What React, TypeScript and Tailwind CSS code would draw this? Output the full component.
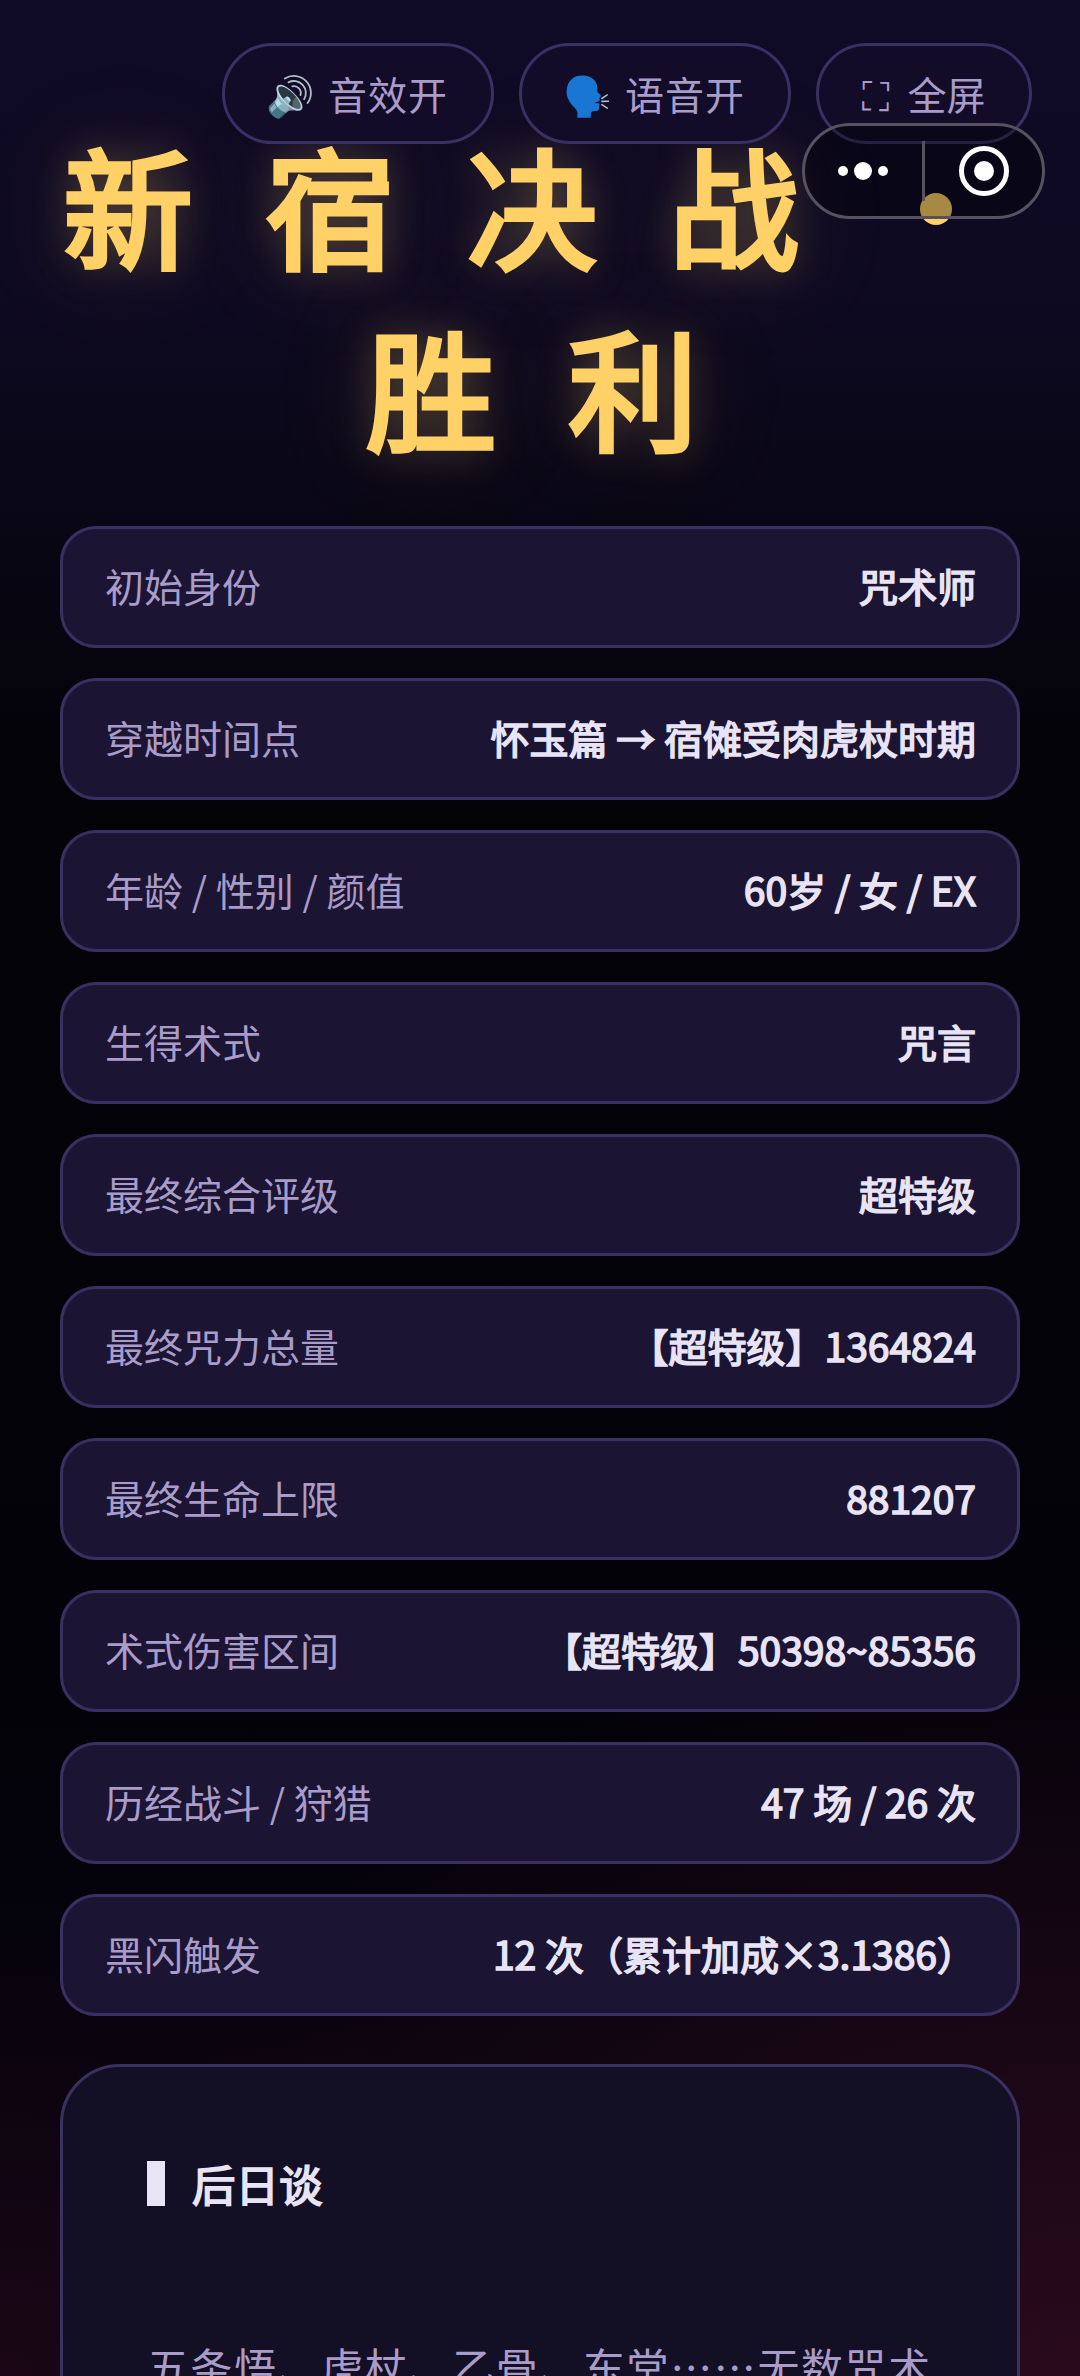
import React from "react";

const rows = [
  ["初始身份", "咒术师"],
  ["穿越时间点", "怀玉篇 → 宿傩受肉虎杖时期"],
  ["年龄 / 性别 / 颜值", "60岁 / 女 / EX"],
  ["生得术式", "咒言"],
  ["最终综合评级", "超特级"],
  ["最终咒力总量", "【超特级】1364824"],
  ["最终生命上限", "881207"],
  ["术式伤害区间", "【超特级】50398~85356"],
  ["历经战斗 / 狩猎", "47 场 / 26 次"],
  ["黑闪触发", "12 次（累计加成×3.1386）"],
];

const font = "[font-family:'Noto_Sans_CJK_SC','Noto_Sans',sans-serif]";

const TopButton = ({ icon, text, className }: { icon: string; text: string; className: string }) => (
  <div className={`${className} h-[101px] flex items-center justify-center rounded-full border-[3px] border-[#3a3163] bg-[#120c28] text-[39px] text-[#a99cc9]`}>
    <span>{icon}</span>
    <span>{text}</span>
  </div>
);

const Row = ({ label, value }: { label: string; value: string }) => (
  <div className="h-[122px] flex items-center justify-between pl-[42px] pr-[41px] pb-[3px] rounded-[36px] border-[3px] border-[#3a3163] bg-[#1b1533]">
    <span className="text-[39px] text-[#a99cc9]">{label}</span>
    <span className="text-[39px] text-[#e9e4f5] [-webkit-text-stroke:1.6px_#e9e4f5]">{value}</span>
  </div>
);

export default function App() {
  return (
    <div className={`${font} relative w-[1080px] h-[2376px] overflow-hidden bg-[radial-gradient(ellipse_1000px_750px_at_100%_100%,#290a1c_0%,transparent_100%),radial-gradient(ellipse_700px_450px_at_0%_100%,#1a0616_0%,transparent_100%),linear-gradient(180deg,#0f0a26_0%,#0e0a22_12%,#040308_32%,#030208_70%,#080410_100%)]`}>
      <div className="absolute top-[43px] left-[222px] flex gap-[25px]">
        <TopButton icon="🔊" text="音效开" className="w-[272px] gap-[12px] tracking-[1px] pr-[2px]" />
        <TopButton icon="🗣️" text="语音开" className="w-[272px] gap-[12px] tracking-[1px] pr-[2px]" />
        <TopButton icon="⛶" text="全屏" className="w-[216px] gap-[18px]" />
      </div>

      <div className="pt-[111px] text-[130px] leading-[182px] text-[#ffd166] tracking-[72px] [-webkit-text-stroke:5px_#ffd166] [text-shadow:0_0_40px_rgba(255,209,102,0.35),0_0_110px_rgba(255,209,102,0.22)]">
        <div className="ml-[63px]">新宿决战</div>
        <div className="ml-[366px]">胜利</div>
      </div>

      <div className="mt-[51px] mx-[60px] flex flex-col gap-[30px]">
        {rows.map(([label, value]) => (
          <Row key={label} label={label} value={value} />
        ))}
        <div className="mt-[18px] h-[600px] px-[84px] pt-[84px] rounded-[60px] border-[3px] border-[#3a3163] bg-[#130f24]">
          <div className="flex items-center gap-[27px]">
            <span className="w-[18px] h-[45px] bg-[#e9e4f5]" />
            <span className="text-[43.5px] text-[#e9e4f5] [-webkit-text-stroke:1.7px_#e9e4f5]">后日谈</span>
          </div>
          <p className="mt-[111px] text-[42px] leading-[78px] tracking-[1.6px] whitespace-nowrap text-[#a99cc9]">五条悟、虎杖、乙骨、东堂……无数咒术</p>
        </div>
      </div>

      {/* floating dot sits under the capsule */}
      <div className="absolute left-[920px] top-[193px] w-[32px] h-[32px] rounded-full bg-[#ffd166]" />
      <div className="absolute left-[802px] top-[123px] w-[243px] h-[96px] flex rounded-full border-[3px] border-[#56525f] bg-[rgba(0,0,0,0.34)]">
        <div className="w-[115px] flex items-center justify-center">
          <svg width="60" height="20" viewBox="0 0 60 20">
            <circle cx="10" cy="10" r="5" fill="#fff" />
            <circle cx="30" cy="10" r="9" fill="#fff" />
            <circle cx="50" cy="10" r="5" fill="#fff" />
          </svg>
        </div>
        <div className="w-[3px] h-[60px] mt-[15px] ml-[2px] bg-[#56525f]" />
        <div className="flex-1 flex items-center justify-center">
          <svg width="52" height="52" viewBox="0 0 52 52">
            <circle cx="26" cy="26" r="22.5" fill="none" stroke="#fff" strokeWidth="5" />
            <circle cx="26" cy="26" r="10" fill="#fff" />
          </svg>
        </div>
      </div>
    </div>
  );
}
